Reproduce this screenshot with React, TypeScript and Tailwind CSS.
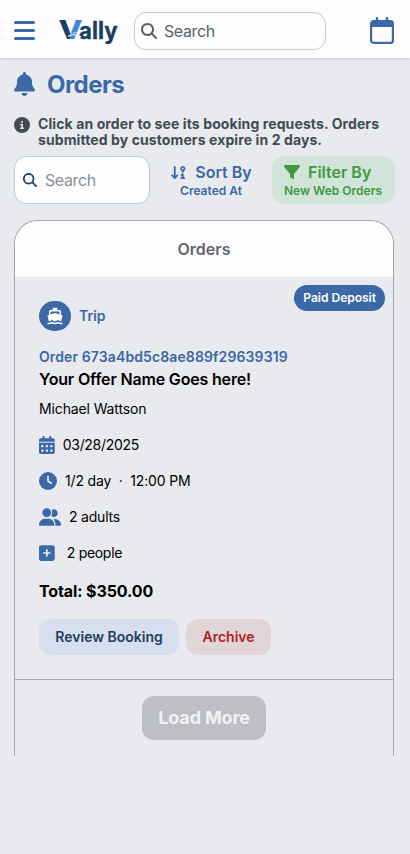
import React from "react";
import {
    FaArrowDown91,
    FaBell,
    FaCalendarDays,
    FaCircleInfo,
    FaClock,
    FaFilter,
    FaMagnifyingGlass,
    FaSquarePlus,
    FaUserGroup,
} from "react-icons/fa6";
import { MdDirectionsBoat } from "react-icons/md";

const Logo: React.FC = () => (
    <svg width="60" height="32" viewBox="0 0 60 32" className="shrink-0 overflow-visible" role="img" aria-label="Vally">
        <defs>
            <linearGradient id="mark" gradientUnits="userSpaceOnUse" x1="9" y1="14" x2="17" y2="16.5">
                <stop offset="0.5" stopColor="#1d3d63" />
                <stop offset="0.5" stopColor="#3f86d6" />
            </linearGradient>
        </defs>
        <text x="-0.5" y="24" fontFamily="Inter, sans-serif" fontSize="26" fontWeight="800" fill="url(#mark)" textLength="24" lengthAdjust="spacingAndGlyphs">V</text>
        <text x="20" y="24" fontFamily="Inter, sans-serif" fontSize="24" fontWeight="700" fill="#1d3d63" stroke="#1d3d63" strokeWidth="0.4" textLength="38.5" lengthAdjust="spacingAndGlyphs">ally</text>
        <path d="M9 21.5 Q13 18.5 17 20.5 Q19 22 22 21.5" fill="none" stroke="#fdfdfd" strokeWidth="1.1" />
        <path d="M14 18.5 L16.5 17 L20 20" fill="none" stroke="#fdfdfd" strokeWidth="0.8" />
    </svg>
);

const CalendarIcon: React.FC = () => (
    <svg width="24" height="27" viewBox="0 0 24 27" fill="none">
        <path d="M7 1.3v5M17 1.3v5" stroke="#3b68a6" strokeWidth="2.4" strokeLinecap="round" />
        <rect x="1.1" y="4.2" width="21.8" height="21.6" rx="2.4" stroke="#3b68a6" strokeWidth="2.2" />
        <path d="M2 4h20v6H2z" fill="#3b68a6" />
    </svg>
);

const Header: React.FC = () => (
    <header className="flex h-[58px] items-center bg-[#fdfdfd] pl-3.5 pr-4 pt-[3px] shadow-sm">
        <div className="flex w-[21px] shrink-0 flex-col gap-[5px]">
            <span className="h-[3px] rounded-full bg-[#3b68a6]" />
            <span className="h-[3px] rounded-full bg-[#3b68a6]" />
            <span className="h-[3px] rounded-full bg-[#3b68a6]" />
        </div>
        <div className="ml-6 w-[60px] shrink-0">
            <Logo />
        </div>
        <div className="ml-[15px] flex h-[38px] w-[192px] items-center rounded-xl border border-[#c3cad8] pl-1.5">
            <FaMagnifyingGlass className="size-4 text-[#5c6066]" />
            <span className="ml-[7px] text-base tracking-[-0.4px] text-[#5c6066]">Search</span>
        </div>
        <div className="ml-auto">
            <CalendarIcon />
        </div>
    </header>
);

const Toolbar: React.FC = () => (
    <div className="mt-2 flex h-12">
        <div className="flex w-[136px] items-center rounded-xl border border-[#b9c9e2] bg-[#fdfdfd] pl-2">
            <FaMagnifyingGlass className="size-3.5 text-[#1d3d63]" />
            <span className="ml-2 text-base tracking-[-0.4px] text-[#8d9096]">Search</span>
        </div>
        <div className="ml-[9px] flex w-[104px] flex-col items-center pt-1.5 text-[#3b68a6]">
            <div className="flex items-center gap-2 text-base leading-5 font-semibold whitespace-nowrap">
                <FaArrowDown91 className="size-[17px]" />
                Sort By
            </div>
            <span className="text-xs leading-[18px] font-semibold">Created At</span>
        </div>
        <div className="ml-[9px] flex w-[123px] flex-col rounded-xl bg-[#d2e4da] pl-3 pt-1.5 text-[#3f9a3f]">
            <div className="flex items-center gap-2 text-base leading-5 font-semibold whitespace-nowrap">
                <FaFilter className="size-4" />
                Filter By
            </div>
            <span className="text-xs leading-[18px] font-semibold whitespace-nowrap">New Web Orders</span>
        </div>
    </div>
);

const OrderCard: React.FC = () => (
    <div className="relative h-[403px] border-b border-[#a4a6ab] px-6 pt-[23px] text-sm text-black">
        <span className="absolute top-2 right-2 flex h-[26px] items-center rounded-full bg-[#3b68a6] px-[9px] text-xs font-semibold text-white">
            Paid Deposit
        </span>

        <div className="flex h-8 items-center gap-2 font-semibold text-[#3b68a6]">
            <span className="flex h-[30px] w-8 items-center justify-center rounded-full bg-[#3b68a6]">
                <MdDirectionsBoat className="size-[18px] text-white" />
            </span>
            Trip
        </div>

        <p className="mt-[15px] font-semibold leading-5 tracking-[0.11px] text-[#3b68a6]">Order 673a4bd5c8ae889f29639319</p>
        <h3 className="text-base leading-6 font-semibold tracking-[-0.17px]">Your Offer Name Goes here!</h3>
        <p className="mt-2 leading-5 tracking-[-0.13px]">Michael Wattson</p>

        {/* Booking details */}
        <div className="mt-4 flex h-5 items-center gap-2">
            <FaCalendarDays className="h-[18px] w-[15.75px] text-[#3b68a6]" />
            <span className="tracking-[-0.3px]">03/28/2025</span>
        </div>
        <div className="mt-4 flex h-5 items-center gap-2 tracking-[-0.15px]">
            <FaClock className="size-[18px] text-[#3b68a6]" />
            <span>1/2 day&nbsp; ·&nbsp; 12:00 PM</span>
        </div>
        <div className="mt-4 flex h-5 items-center gap-2 tracking-[-0.2px]">
            <FaUserGroup className="h-[18px] w-[22px] text-[#3b68a6]" />
            2 adults
        </div>
        <div className="mt-4 flex h-5 items-center gap-3 tracking-[-0.3px]">
            <FaSquarePlus className="h-[18px] w-[15.75px] text-[#3b68a6]" />
            2 people
        </div>

        <p className="mt-4 text-base leading-6 font-bold tracking-[-0.12px]">Total: $350.00</p>

        <div className="mt-4 flex gap-[7px] font-semibold">
            <button className="h-9 w-[140px] rounded-xl bg-[#d7deed] text-[#1d3d63]">Review Booking</button>
            <button className="h-9 w-[85px] rounded-xl bg-[#e1d5d8] text-[#b01e22]">Archive</button>
        </div>
    </div>
);

const App: React.FC = () => {
    return (
        <div className="min-h-screen bg-[#e8eaee] font-['Inter',sans-serif]">
            <Header />
            <main className="px-[14px] pt-2.5">
                <div className="flex h-8 items-center gap-3 text-[#3b68a6]">
                    <FaBell className="h-6 w-[21px]" />
                    <h1 className="pt-0.5 text-2xl font-bold tracking-[-0.55px]">Orders</h1>
                </div>

                <div className="mt-4 flex gap-2 text-[#444a55]">
                    <FaCircleInfo className="mt-px size-4 shrink-0" />
                    <p className="text-sm leading-4 font-bold tracking-[0.1px] whitespace-nowrap">
                        Click an order to see its booking requests. Orders
                        <br />
                        submitted by customers expire in 2 days.
                    </p>
                </div>

                <Toolbar />

                <section className="mt-4 h-[536px] w-[380px] overflow-hidden rounded-t-[24px] border border-b-0 border-[#a4a6ab]">
                    <div className="flex h-14 items-center justify-center bg-[#fdfdfd] font-semibold text-[#63666b]">
                        Orders
                    </div>
                    <OrderCard />
                    <div className="flex justify-center pt-4">
                        <button className="h-11 w-[124px] rounded-xl bg-[#bdbfc3] text-lg font-bold tracking-[-0.15px] text-[#f1f2f4]">
                            Load More
                        </button>
                    </div>
                </section>
            </main>
        </div>
    );
};

export default App;
